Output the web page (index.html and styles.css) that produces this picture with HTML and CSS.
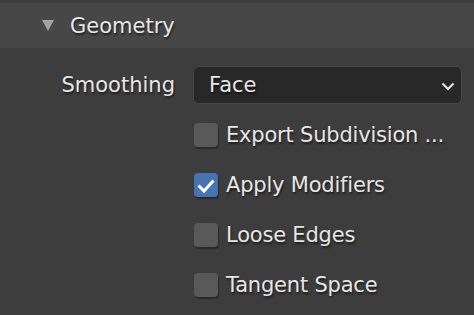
FILE: index.html
```html
<!DOCTYPE html>
<html lang="en">
<head>
    <meta charset="UTF-8">
    <meta name="viewport" content="width=device-width, initial-scale=1.0">
    <title>Geometry</title>
    <link rel="stylesheet" href="styles.css">
</head>
<body>
    <div class="panel">
        <div class="panel-header">
            <span class="arrow"></span>
            <span class="title">Geometry</span>
        </div>

        <div class="panel-body">
            <div class="prop-row">
                <div class="prop-label">Smoothing</div>
                <div class="dropdown">
                    <span>Face</span>
                    <svg class="chevron" width="14" height="9" viewBox="0 0 14 9">
                        <polyline points="1.5,1.5 7,7 12.5,1.5" fill="none" stroke="#e6e6e6" stroke-width="2"/>
                    </svg>
                </div>
            </div>

            <div class="prop-row">
                <div class="prop-label"></div>
                <div class="check">
                    <span class="box"></span>
                    <span class="check-text">Export Subdivision ...</span>
                </div>
            </div>

            <div class="prop-row">
                <div class="prop-label"></div>
                <div class="check">
                    <span class="box checked">
                        <svg width="24" height="24" viewBox="0 0 24 24">
                            <polyline points="4.5,12.5 10,18 19.5,7.5" fill="none" stroke="#fff" stroke-width="3"/>
                        </svg>
                    </span>
                    <span class="check-text">Apply Modifiers</span>
                </div>
            </div>

            <div class="prop-row">
                <div class="prop-label"></div>
                <div class="check">
                    <span class="box"></span>
                    <span class="check-text">Loose Edges</span>
                </div>
            </div>

            <div class="prop-row">
                <div class="prop-label"></div>
                <div class="check">
                    <span class="box"></span>
                    <span class="check-text">Tangent Space</span>
                </div>
            </div>
        </div>
    </div>
</body>
</html>
```

FILE: styles.css
```css
body {
    margin: 0;
    background-color: #3d3d3d;
    font-family: "DejaVu Sans", Verdana, sans-serif;
    font-size: 21px;
    color: #e6e6e6;
}
.panel {
    padding-top: 3px;
}
.panel-header {
    height: 45px;
    background-color: #474747;
    display: flex;
    align-items: center;
    text-shadow: 1px 2px 2px #1e1e1e;
}
.arrow {
    width: 0;
    height: 0;
    margin-left: 42px;
    margin-right: 16px;
    border-left: 6px solid transparent;
    border-right: 6px solid transparent;
    border-top: 11px solid #a3a3a3;
}
.panel-body {
    padding-top: 12px;
}
.prop-row {
    display: grid;
    grid-template-columns: 175px 1fr;
    column-gap: 18px;
    height: 50px;
    align-items: center;
    padding-right: 12px;
}
.prop-label {
    text-align: right;
    text-shadow: 1px 2px 2px #1e1e1e;
}
.dropdown {
    height: 36px;
    border: 1px solid #474747;
    border-radius: 6px;
    background-color: #282828;
    display: flex;
    align-items: center;
    justify-content: space-between;
    padding: 0 6px 0 15px;
    text-shadow: 1px 2px 2px #111;
}
.chevron {
    margin-top: 2px;
}
.check {
    display: flex;
    align-items: center;
    padding-left: 1px;
}
.box {
    width: 24px;
    height: 24px;
    border-radius: 4px;
    background-color: #595959;
    box-shadow: 1px 2px 1px #2a2a2a;
    margin-right: 8px;
    flex-shrink: 0;
}
.box.checked {
    background-color: #4772b3;
}
.box svg {
    display: block;
}
.check-text {
    text-shadow: 1px 2px 2px #1e1e1e;
    white-space: nowrap;
    letter-spacing: -0.2px;
}
```
